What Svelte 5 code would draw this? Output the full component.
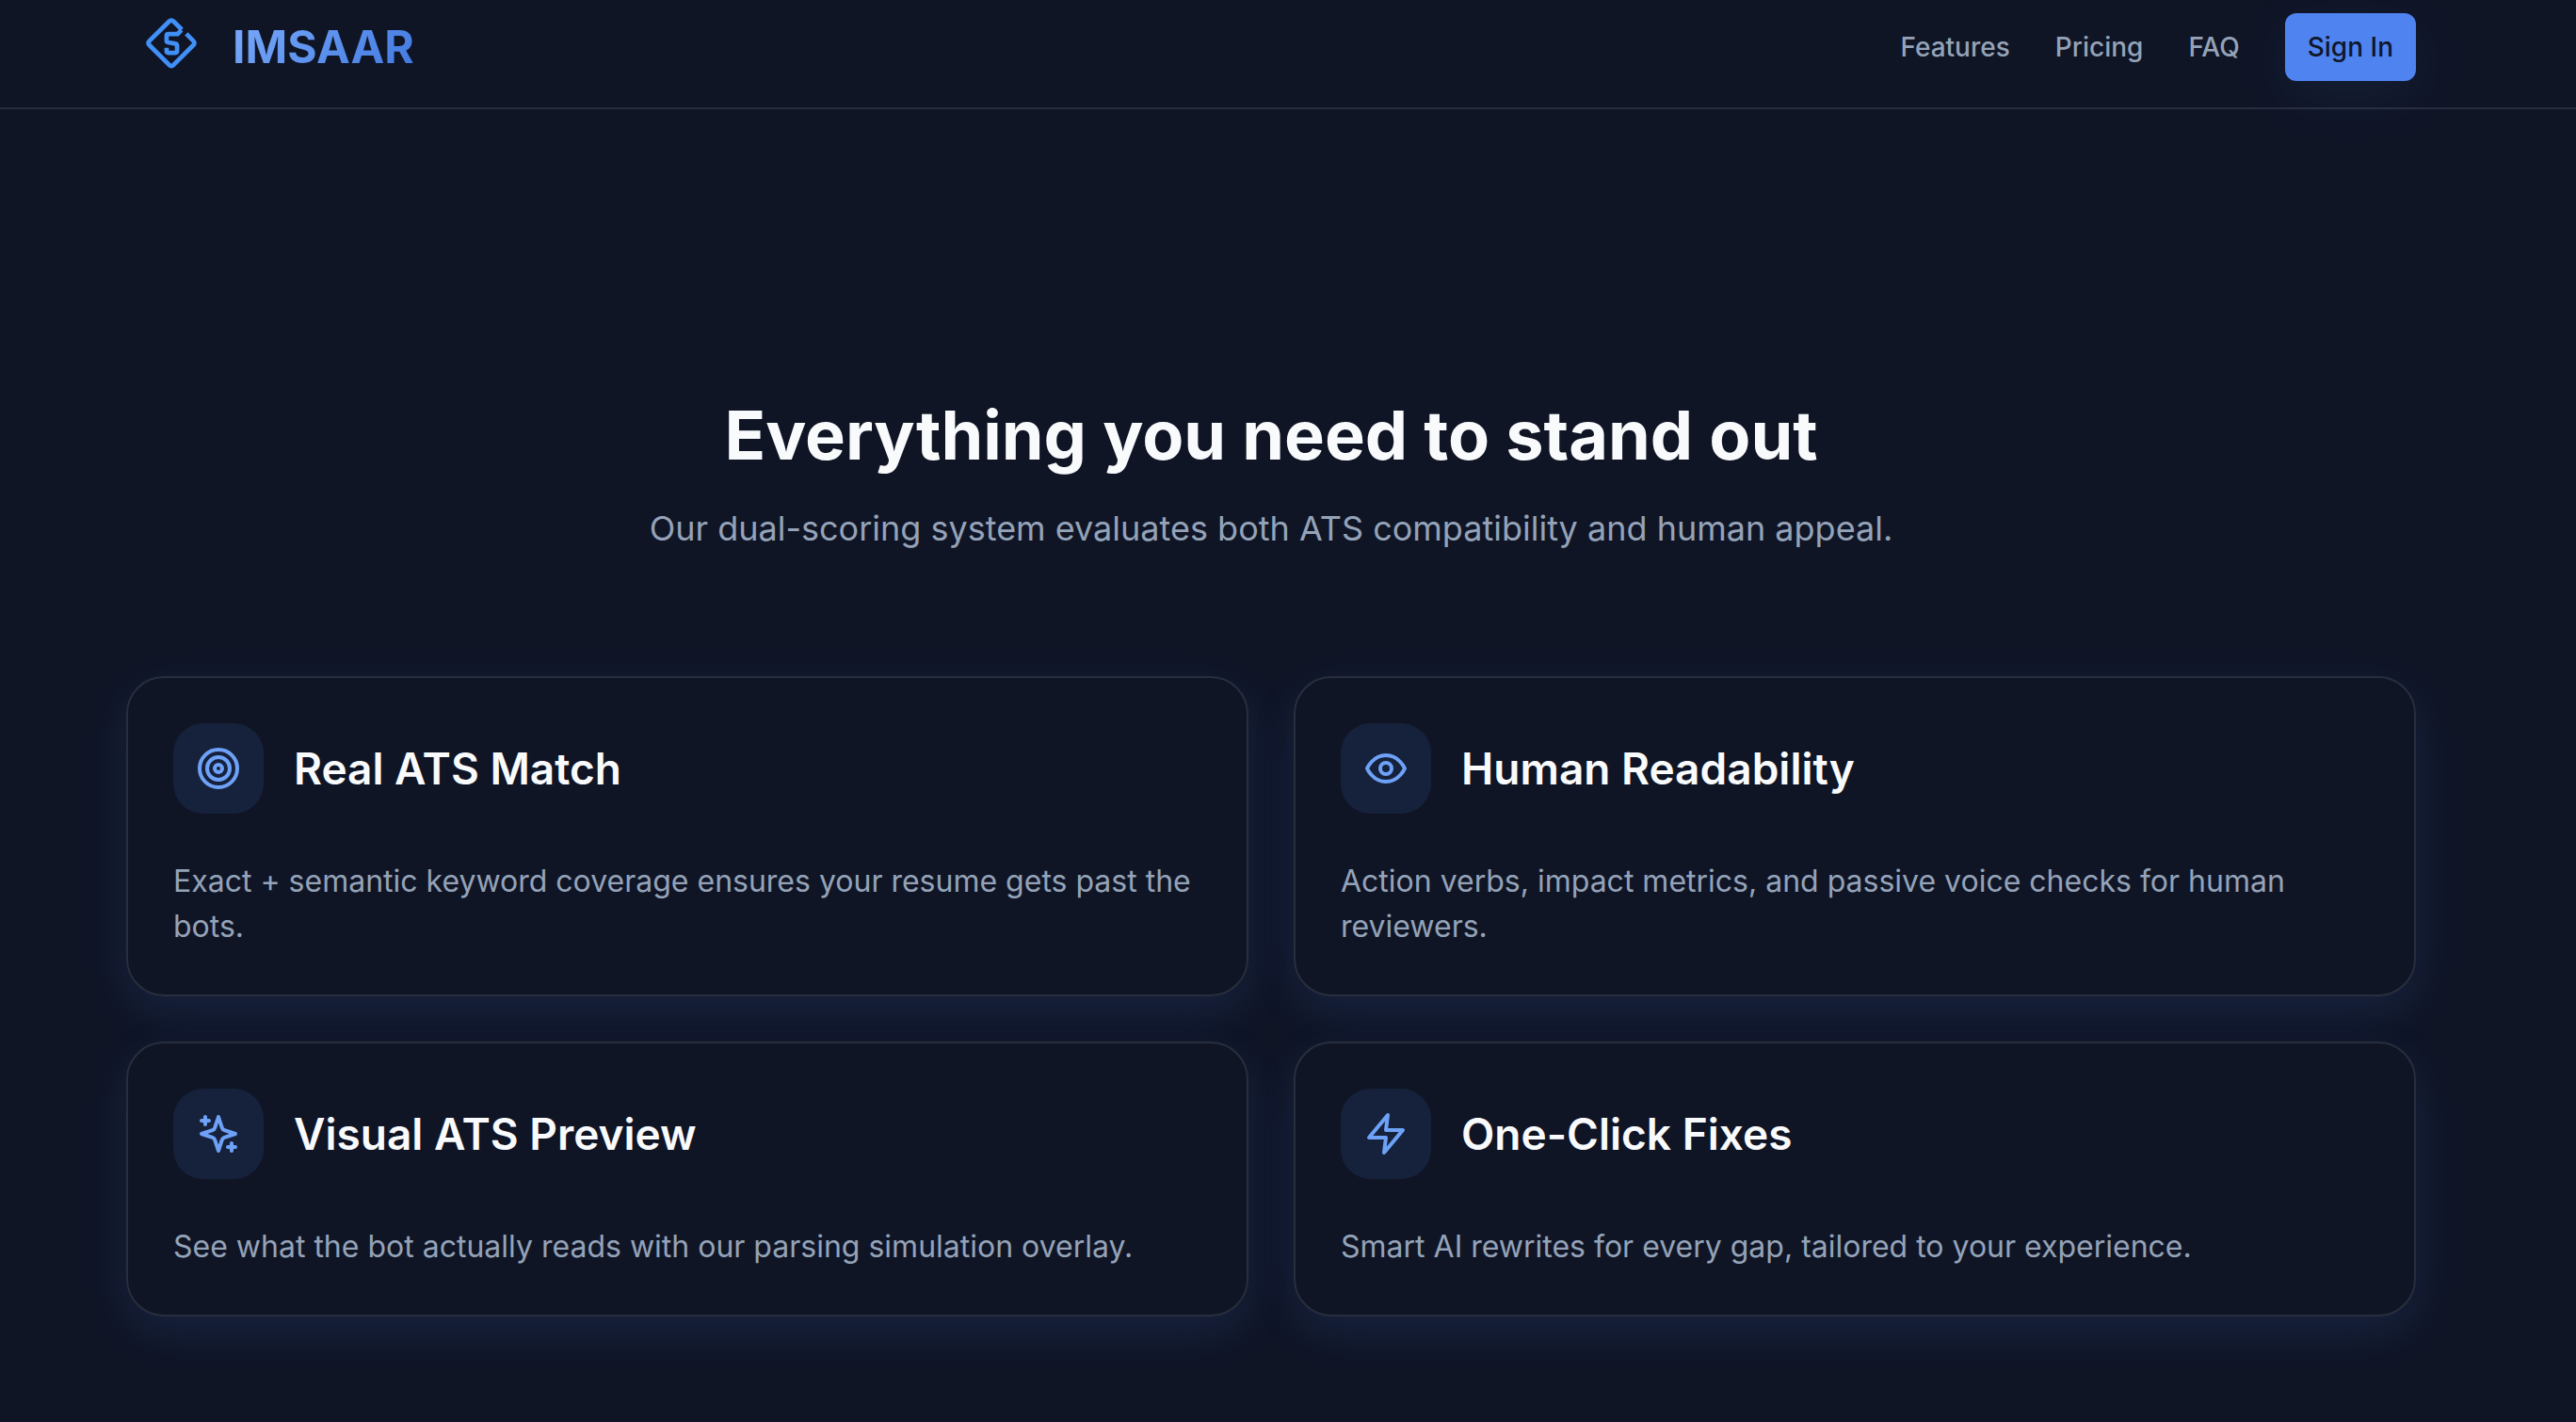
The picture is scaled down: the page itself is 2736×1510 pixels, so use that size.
<script lang="ts">
    const links = ["Features", "Pricing", "FAQ"];

    const features = [
        {
            icon: "target",
            title: "Real ATS Match",
            text: "Exact + semantic keyword coverage ensures your resume gets past the bots.",
        },
        {
            icon: "eye",
            title: "Human Readability",
            text: "Action verbs, impact metrics, and passive voice checks for human reviewers.",
        },
        {
            icon: "sparkles",
            title: "Visual ATS Preview",
            text: "See what the bot actually reads with our parsing simulation overlay.",
        },
        {
            icon: "zap",
            title: "One-Click Fixes",
            text: "Smart AI rewrites for every gap, tailored to your experience.",
        },
    ];
</script>

<header class="header">
    <div class="container bar">
        <a class="brand" href="#home">
            <svg class="logo" viewBox="0 0 160 160" aria-hidden="true">
                <path d="M127 50 L149 72 Q156 79 149 86 L87 148 Q80 155 73 148 L11 86 Q4 79 11 72 L73 11 Q80 4 87 11 L113 37" />
                <path d="M112 38 L99 51 H71 Q65 51 65 57 V71 Q65 76 70 77 L92 81 Q98 82 98 88 V104 Q98 110 92 110 H71 Q65 110 65 104 V94" />
            </svg>
            <span class="brand-name">IMSAAR</span>
        </a>
        <nav class="nav">
            {#each links as link}
                <a href="#{link.toLowerCase()}">{link}</a>
            {/each}
            <button type="button" class="sign-in">Sign In</button>
        </nav>
    </div>
</header>

<main class="container" id="features">
    <div class="intro">
        <h2>Everything you need to stand out</h2>
        <p>Our dual-scoring system evaluates both ATS compatibility and human appeal.</p>
    </div>

    <div class="grid">
        {#each features as feature}
            <article class="card">
                <div class="card-head">
                    <div class="icon-box">
                        <svg class="icon" viewBox="0 0 24 24" aria-hidden="true">
                            {#if feature.icon === "target"}
                                <circle cx="12" cy="12" r="10" />
                                <circle cx="12" cy="12" r="6" />
                                <circle cx="12" cy="12" r="2" />
                            {:else if feature.icon === "eye"}
                                <path d="M2 12s3-7 10-7 10 7 10 7-3 7-10 7-10-7-10-7Z" />
                                <circle cx="12" cy="12" r="3" />
                            {:else if feature.icon === "sparkles"}
                                <path d="m12 3-1.912 5.813a2 2 0 0 1-1.275 1.275L3 12l5.813 1.912a2 2 0 0 1 1.275 1.275L12 21l1.912-5.813a2 2 0 0 1 1.275-1.275L21 12l-5.813-1.912a2 2 0 0 1-1.275-1.275L12 3Z" />
                                <path d="M5 3v4M19 17v4M3 5h4M17 19h4" />
                            {:else}
                                <polygon points="13 2 3 14 12 14 11 22 21 10 12 10 13 2" />
                            {/if}
                        </svg>
                    </div>
                    <h3>{feature.title}</h3>
                </div>
                <p>{feature.text}</p>
            </article>
        {/each}
    </div>
</main>

<style>
    :global(body) { margin: 0; background: #101526; color: #f8fafc; font-family: Inter, sans-serif; }
    :global(#app) { --muted: #94a3b8; --line: #292e3d; --blue: #6ea2f8; }

    .header { padding-right: 36px; border-bottom: 2px solid var(--line); }
    .container { box-sizing: border-box; max-width: 2560px; margin: 0 auto; padding: 0 64px; }
    .bar { display: flex; align-items: center; justify-content: space-between; padding-top: 14px; padding-bottom: 28px; }

    .brand { display: flex; align-items: center; gap: 38px; padding-left: 21px; text-decoration: none; }
    .logo { width: 54px; height: 54px; margin-bottom: 8px; fill: none; stroke: #4090f8; stroke-width: 14; stroke-linejoin: round; }
    .brand-name { font-size: 48px; line-height: 64px; font-weight: 700; color: transparent; background: linear-gradient(135deg, #7aaafa, #3f78e0); background-clip: text; }

    .nav { display: flex; align-items: center; gap: 48px; }
    .nav a { font-size: 28px; line-height: 40px; font-weight: 500; color: var(--muted); text-decoration: none; }
    .sign-in { padding: 16px 24px; border: 0; border-radius: 12px; background: #4f83f0; box-shadow: 0 16px 60px rgba(80, 145, 246, 0.08); color: #0f172a; font-family: inherit; font-size: 28px; line-height: 40px; font-weight: 500; cursor: pointer; }

    main.container { max-width: 2596px; padding: 300px 100px 112px 64px; }
    .intro { margin-bottom: 132px; text-align: center; }
    .intro h2 { margin: 0 0 28px; font-size: 72px; line-height: 92px; font-weight: 700; }
    .intro p { margin: 0; font-size: 36px; line-height: 50px; color: var(--muted); }

    .grid { display: grid; grid-template-columns: 1fr 1fr; gap: 48px; }
    .card { padding: 48px; border: 2px solid var(--line); border-radius: 40px; background: #101526; box-shadow: 0 16px 48px rgba(70, 140, 246, 0.12); }
    .card-head { display: flex; align-items: center; gap: 32px; margin-bottom: 48px; }
    .icon-box { display: grid; place-items: center; width: 96px; height: 96px; border-radius: 32px; background: #16223b; }
    .icon { width: 48px; height: 48px; fill: none; stroke: var(--blue); stroke-width: 2; stroke-linecap: round; stroke-linejoin: round; }
    .card h3 { margin: 0; font-size: 46px; line-height: 64px; font-weight: 600; }
    .card p { margin: 0; font-size: 32px; line-height: 48px; color: var(--muted); }
</style>
